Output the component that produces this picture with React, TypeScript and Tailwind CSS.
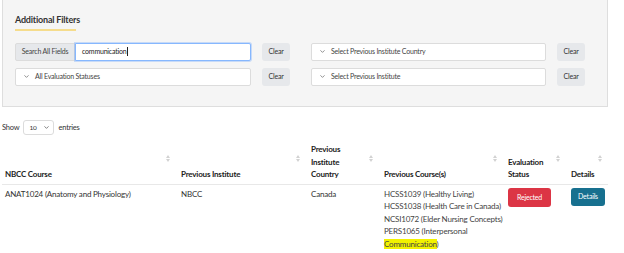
import { ChevronDown } from 'lucide-react';

const font = { fontFamily: 'Lato, "Open Sans", sans-serif' };

const SortIcon = () => (
    <span className="absolute right-[6px] top-[12px] flex flex-col items-center gap-[1px]">
        <span className="block w-0 h-0 border-l-[2px] border-r-[2px] border-b-[3px] border-l-transparent border-r-transparent border-b-[#d2d2d2]"></span>
        <span className="block w-0 h-0 border-l-[2px] border-r-[2px] border-t-[3px] border-l-transparent border-r-transparent border-t-[#d2d2d2]"></span>
    </span>
);

const ClearButton = () => (
    <button className="h-[18px] w-[28px] rounded-[3px] bg-[#e6e8eb] text-[7px] tracking-[-0.2px] text-[#333] flex items-center justify-center">
        Clear
    </button>
);

const SelectBox = ({ label, width }: { label: string; width: string }) => (
    <div className={`${width} h-[18px] bg-white border border-[#dcdcdc] rounded-[2px] flex items-center pl-[7px] gap-[5px] text-[7px] tracking-[-0.2px] text-[#444]`}>
        <ChevronDown size={7} strokeWidth={2.5} className="text-[#666]" />
        <span>{label}</span>
    </div>
);

export default function App() {
    return (
        <div className="w-[624px] h-[253px] bg-white overflow-hidden relative" style={font}>
            {/* Filters panel */}
            <div className="ml-[2px] w-[606px] h-[107px] bg-[#f5f5f5] border border-t-0 border-[#dedede] pl-[12px]">
                <div className="pt-[14px] text-[9px] tracking-[-0.2px] font-bold text-[#333] leading-[12px]">Additional Filters</div>
                <div className="mt-[3px] h-[1.5px] w-[61px] bg-[#f5dc8c]"></div>

                <div className="mt-[12px] flex flex-col gap-[7px]">
                    <div className="flex items-center">
                        <div className="w-[236px] h-[18px] flex">
                            <div className="h-full w-[60px] bg-[#e6e8eb] border border-[#dcdcdc] rounded-l-[2px] flex items-center justify-center text-[7px] tracking-[-0.2px] text-[#444]">
                                Search All Fields
                            </div>
                            <div className="h-full flex-1 bg-white border border-[#86b7fe] rounded-r-[2px] shadow-[0_0_0_1px_rgba(13,110,253,0.2)] flex items-center pl-[6px] text-[7px] tracking-[-0.2px] text-[#222]">
                                communication<span className="inline-block w-[0.5px] h-[9px] bg-[#222] ml-[0.5px]"></span>
                            </div>
                        </div>
                        <div className="ml-[11px]"><ClearButton /></div>
                        <div className="ml-[21px]"><SelectBox label="Select Previous Institute Country" width="w-[235px]" /></div>
                        <div className="ml-[11px]"><ClearButton /></div>
                    </div>
                    <div className="flex items-center">
                        <SelectBox label="All Evaluation Statuses" width="w-[236px]" />
                        <div className="ml-[11px]"><ClearButton /></div>
                        <div className="ml-[21px]"><SelectBox label="Select Previous Institute" width="w-[235px]" /></div>
                        <div className="ml-[11px]"><ClearButton /></div>
                    </div>
                </div>
            </div>

            {/* Show entries */}
            <div className="mt-[13px] ml-[2px] flex items-center text-[7.5px] tracking-[-0.2px] text-[#333]">
                <span>Show</span>
                <div className="ml-[4px] w-[31px] h-[15px] border border-[#dcdcdc] rounded-[3px] bg-white flex items-center pl-[5px] gap-[6px] text-[6.5px]">
                    <span>10</span>
                    <ChevronDown size={7} strokeWidth={2.5} className="text-[#555]" />
                </div>
                <span className="ml-[4px]">entries</span>
            </div>

            {/* Table */}
            <table className="mt-[8px] ml-[2px] w-[606px] table-fixed border-collapse text-[8px] tracking-[-0.2px] text-[#333]">
                <colgroup>
                    <col className="w-[174px]" />
                    <col className="w-[130px]" />
                    <col className="w-[73px]" />
                    <col className="w-[124px]" />
                    <col className="w-[63px]" />
                    <col className="w-[42px]" />
                </colgroup>
                <thead>
                    <tr className="border-b border-[#e8e8e8] align-bottom text-left font-bold text-[#222] leading-[12.5px]">
                        <th className="relative pl-[3px] pb-[3px]">NBCC Course<SortIcon /></th>
                        <th className="relative pl-[5px] pb-[3px]">Previous Institute<SortIcon /></th>
                        <th className="relative pl-[5px] pb-[3px]">Previous<br />Institute<br />Country<SortIcon /></th>
                        <th className="relative pl-[5px] pb-[3px]">Previous Course(s)<SortIcon /></th>
                        <th className="relative pl-[5px] pb-[3px]">Evaluation<br />Status<SortIcon /></th>
                        <th className="relative pl-[5px] pb-[3px]">Details<SortIcon /></th>
                    </tr>
                </thead>
                <tbody>
                    <tr className="align-top leading-[12.5px]">
                        <td className="pl-[3px] pt-[3px]">ANAT1024 (Anatomy and Physiology)</td>
                        <td className="pl-[5px] pt-[3px]">NBCC</td>
                        <td className="pl-[5px] pt-[3px]">Canada</td>
                        <td className="pl-[5px] pt-[3px] text-[#444] whitespace-nowrap">
                            <div>HCSS1039 (Healthy Living)</div>
                            <div>HCSS1038 (Health Care in Canada)</div>
                            <div>NCSI1072 (Elder Nursing Concepts)</div>
                            <div>PERS1065 (Interpersonal</div>
                            <div><span className="bg-[#f2f200]">Communication</span>)</div>
                        </td>
                        <td className="pl-[5px] pt-[3px]">
                            <button className="w-[43px] h-[19px] rounded-[3px] bg-[#dc3545] text-white text-[7px] flex items-center justify-center">
                                Rejected
                            </button>
                        </td>
                        <td className="pl-[5px] pt-[3px]">
                            <button className="w-[34px] h-[18px] rounded-[3px] bg-[#17708f] text-white text-[7px] flex items-center justify-center">
                                Details
                            </button>
                        </td>
                    </tr>
                </tbody>
            </table>
        </div>
    );
}
